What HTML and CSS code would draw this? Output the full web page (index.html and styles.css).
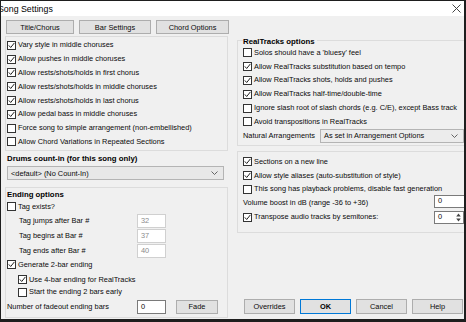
FILE: index.html
```html
<!DOCTYPE html>
<html>
<head>
<meta charset="utf-8">
<title>Song Settings</title>
<link rel="stylesheet" href="styles.css">
</head>
<body>
<div class="win">
  <div class="titlebar">
    <span class="title">Song Settings</span>
    <svg class="close" width="9" height="9" viewBox="0 0 9 9"><path d="M0.5 0.5 L8.5 8.5 M8.5 0.5 L0.5 8.5" stroke="#444" stroke-width="1" fill="none"/></svg>
  </div>
  <div class="content">
    <div class="left">
      <div class="tabs">
        <div class="btn">Title/Chorus</div>
        <div class="btn">Bar Settings</div>
        <div class="btn">Chord Options</div>
      </div>
      <div class="panel opts">
        <div class="row"><svg class="cb" viewBox="0 0 9 9"><rect x=".5" y=".5" width="8" height="8"/><path d="M1.8 4.4 L3.7 6.5 L7.4 1.9"/></svg><span>Vary style in middle choruses</span></div>
        <div class="row"><svg class="cb" viewBox="0 0 9 9"><rect x=".5" y=".5" width="8" height="8"/><path d="M1.8 4.4 L3.7 6.5 L7.4 1.9"/></svg><span>Allow pushes in middle choruses</span></div>
        <div class="row"><svg class="cb" viewBox="0 0 9 9"><rect x=".5" y=".5" width="8" height="8"/><path d="M1.8 4.4 L3.7 6.5 L7.4 1.9"/></svg><span>Allow rests/shots/holds in first chorus</span></div>
        <div class="row"><svg class="cb" viewBox="0 0 9 9"><rect x=".5" y=".5" width="8" height="8"/><path d="M1.8 4.4 L3.7 6.5 L7.4 1.9"/></svg><span>Allow rests/shots/holds in middle choruses</span></div>
        <div class="row"><svg class="cb" viewBox="0 0 9 9"><rect x=".5" y=".5" width="8" height="8"/><path d="M1.8 4.4 L3.7 6.5 L7.4 1.9"/></svg><span>Allow rests/shots/holds in last chorus</span></div>
        <div class="row"><svg class="cb" viewBox="0 0 9 9"><rect x=".5" y=".5" width="8" height="8"/><path d="M1.8 4.4 L3.7 6.5 L7.4 1.9"/></svg><span>Allow pedal bass in middle choruses</span></div>
        <div class="row"><svg class="cb" viewBox="0 0 9 9"><rect x=".5" y=".5" width="8" height="8"/></svg><span>Force song to simple arrangement (non-embellished)</span></div>
        <div class="row"><svg class="cb" viewBox="0 0 9 9"><rect x=".5" y=".5" width="8" height="8"/></svg><span>Allow Chord Variations in Repeated Sections</span></div>
      </div>
      <div class="panel drums">
        <div class="gtitle">Drums count-in (for this song only)</div>
        <div class="select wide"><span>&lt;default&gt; (No Count-In)</span><svg class="chev" width="7" height="4" viewBox="0 0 7 4"><path d="M0.5 0.5 L3.5 3.5 L6.5 0.5"/></svg></div>
      </div>
      <div class="panel ending">
        <div class="gtitle">Ending options</div>
        <div class="row r14"><svg class="cb" viewBox="0 0 9 9"><rect x=".5" y=".5" width="8" height="8"/></svg><span>Tag exists?</span></div>
        <div class="row r15 indent"><span class="lbl">Tag jumps after Bar #</span><span class="field dis">32</span></div>
        <div class="row r15 indent"><span class="lbl">Tag begins at Bar #</span><span class="field dis">37</span></div>
        <div class="row r15 indent"><span class="lbl">Tag ends after Bar #</span><span class="field dis">40</span></div>
        <div class="row r12"><svg class="cb" viewBox="0 0 9 9"><rect x=".5" y=".5" width="8" height="8"/><path d="M1.8 4.4 L3.7 6.5 L7.4 1.9"/></svg><span>Generate 2-bar ending</span></div>
        <div class="row r14 sub gap2"><svg class="cb" viewBox="0 0 9 9"><rect x=".5" y=".5" width="8" height="8"/><path d="M1.8 4.4 L3.7 6.5 L7.4 1.9"/></svg><span>Use 4-bar ending for RealTracks</span></div>
        <div class="row r11 sub"><svg class="cb" viewBox="0 0 9 9"><rect x=".5" y=".5" width="8" height="8"/></svg><span>Start the ending 2 bars early</span></div>
        <div class="row r14 gap2 fade-row"><span class="lbl2">Number of fadeout ending bars</span><span class="field">0</span><div class="btn fade">Fade</div></div>
      </div>
    </div>
    <div class="right">
      <div class="group rt">
        <div class="gtitle over">RealTracks options</div>
        <div class="row"><svg class="cb" viewBox="0 0 9 9"><rect x=".5" y=".5" width="8" height="8"/></svg><span>Solos should have a 'bluesy' feel</span></div>
        <div class="row"><svg class="cb" viewBox="0 0 9 9"><rect x=".5" y=".5" width="8" height="8"/><path d="M1.8 4.4 L3.7 6.5 L7.4 1.9"/></svg><span>Allow RealTracks substitution based on tempo</span></div>
        <div class="row"><svg class="cb" viewBox="0 0 9 9"><rect x=".5" y=".5" width="8" height="8"/><path d="M1.8 4.4 L3.7 6.5 L7.4 1.9"/></svg><span>Allow RealTracks shots, holds and pushes</span></div>
        <div class="row"><svg class="cb" viewBox="0 0 9 9"><rect x=".5" y=".5" width="8" height="8"/><path d="M1.8 4.4 L3.7 6.5 L7.4 1.9"/></svg><span>Allow RealTracks half-time/double-time</span></div>
        <div class="row"><svg class="cb" viewBox="0 0 9 9"><rect x=".5" y=".5" width="8" height="8"/></svg><span>Ignore slash root of slash chords (e.g. C/E), except Bass track</span></div>
        <div class="row"><svg class="cb" viewBox="0 0 9 9"><rect x=".5" y=".5" width="8" height="8"/></svg><span>Avoid transpositions in RealTracks</span></div>
        <div class="row r14"><span class="lbl3">Natural Arrangements</span><div class="select nat"><span>As set in Arrangement Options</span><svg class="chev" width="7" height="4" viewBox="0 0 7 4"><path d="M0.5 0.5 L3.5 3.5 L6.5 0.5"/></svg></div></div>
      </div>
      <div class="group misc">
        <div class="row"><svg class="cb" viewBox="0 0 9 9"><rect x=".5" y=".5" width="8" height="8"/><path d="M1.8 4.4 L3.7 6.5 L7.4 1.9"/></svg><span>Sections on a new line</span></div>
        <div class="row"><svg class="cb" viewBox="0 0 9 9"><rect x=".5" y=".5" width="8" height="8"/><path d="M1.8 4.4 L3.7 6.5 L7.4 1.9"/></svg><span>Allow style aliases (auto-substitution of style)</span></div>
        <div class="row"><svg class="cb" viewBox="0 0 9 9"><rect x=".5" y=".5" width="8" height="8"/></svg><span>This song has playback problems, disable fast generation</span></div>
        <div class="row r14"><span class="lbl4">Volume boost in dB (range -36 to +36)</span><span class="field vol">0</span></div>
        <div class="row r14"><svg class="cb" viewBox="0 0 9 9"><rect x=".5" y=".5" width="8" height="8"/><path d="M1.8 4.4 L3.7 6.5 L7.4 1.9"/></svg><span class="lbl5">Transpose audio tracks by semitones:</span><span class="field spin">0<svg class="spinner" width="5" height="9" viewBox="0 0 5 9"><path d="M2.5 0.5 L4.8 3.5 L0.2 3.5 Z M2.5 8.5 L4.8 5.5 L0.2 5.5 Z"/></svg></span></div>
      </div>
      <div class="buttons">
        <div class="btn b-over">Overrides</div>
        <div class="btn b-ok">OK</div>
        <div class="btn b-cancel">Cancel</div>
        <div class="btn b-help">Help</div>
      </div>
    </div>
  </div>
</div>
</body>
</html>
```
FILE: styles.css
```css
* { box-sizing: border-box; }
html, body { margin: 0; padding: 0; background: #f0f0f0; }
.win {
  width: 466px; height: 322px; overflow: hidden;
  border-top: 1px solid #1e1e1e; border-left: 1px solid #1e1e1e;
  border-right: 2px solid #1e1e1e; border-bottom: 3px solid #1e1e1e;
  background: #f0f0f0;
  font-family: "Liberation Sans", Arial, sans-serif;
  font-size: 7.4px; color: #0a0a0a;
}
.titlebar {
  height: 15px; background: #fff; display: flex; align-items: center;
  justify-content: space-between; overflow: hidden;
}
.title { font-size: 8.8px; margin-left: -3px; color: #000; }
.close { margin-right: 3px; }
.content { display: flex; padding-left: 4px; }
.left { width: 223px; flex: none; display: flex; flex-direction: column; }
.right { width: 232px; flex: none; margin-left: 9px; display: flex; flex-direction: column; }

.btn {
  background: #e1e1e1; border: 1px solid #adadad; display: flex;
  align-items: center; justify-content: center; color: #0a0a0a; white-space: nowrap;
}
.tabs { display: grid; grid-template-columns: 68px 72px 73px; gap: 5px; margin: 4px 0 0 1px; height: 14px; }

.panel { border: 1px solid #dcdcdc; }
.opts { margin-top: 2px; height: 115px; padding: 1.5px 0 0 1px; }
.row { height: 13.8px; display: flex; align-items: center; white-space: nowrap; }
.row span { line-height: 10px; }
.cb { width: 9px; height: 9px; flex: none; margin-right: 2px; }
.cb rect { fill: #fff; stroke: #333; stroke-width: 1; }
.cb path { fill: none; stroke: #222; stroke-width: 1; }

.gtitle { font-weight: bold; font-size: 7.8px; line-height: 10px; height: 10px; color: #000; }
.drums { margin-top: 1px; height: 33px; border-color: transparent; padding: 1px 0 0 1px; }
.select {
  height: 14px; border: 1px solid #b4b4b4; background: #e8e8e8; display: flex;
  align-items: center; justify-content: space-between; padding: 0 5px 0 3px;
}
.select.wide { margin-top: 2px; width: 217px; }
.chev path { fill: none; stroke: #555; stroke-width: 0.9; }

.ending { margin-top: 2px; height: 131px; padding: 1.5px 0 0 1px; }
.r14 { height: 14px; }
.r15 { height: 15px; }
.r12 { height: 12px; }
.r11 { height: 11px; }
.gap2 { margin-top: 2px; }
.indent { padding-left: 12px; }
.sub { padding-left: 11px; }
.lbl { width: 118px; }
.lbl2 { width: 130px; padding-left: 0; }
.field {
  width: 29px; height: 14px; background: #fff; border: 1px solid #7a7a7a;
  display: flex; align-items: center; padding-left: 3px; flex: none;
}
.field.dis { border-color: #d0d0d0; color: #8a8a8a; }
.fade { width: 42px; height: 14px; margin-left: 10px; }

.group { border: 1px solid #dcdcdc; border-right: none; padding-left: 5px; }
.rt { margin-top: 24px; height: 106px; }
.gtitle.over { margin-top: -4px; height: 9px; line-height: 9px; background: #f0f0f0; width: max-content; padding-right: 2px; }
.lbl3 { width: 77px; }
.select.nat { width: 144px; background: #ececec; }
.misc { margin-top: 5px; height: 82px; padding-top: 3px; }
.lbl4 { width: 191px; }
.lbl5 { width: 180px; }
.field.vol { width: 32px; height: 13px; margin-bottom: 4px; }
.field.spin { width: 30px; height: 13px; justify-content: space-between; padding-right: 2px; border-color: #7a7a7a; }
.spinner path { fill: #444; }

.buttons { margin-top: 66px; margin-left: 7px; display: flex; gap: 5px; height: 15px; }
.buttons .btn { width: 51px; height: 15px; }
.b-ok { border-color: #0078d7; font-weight: bold; color: #000; }
```
